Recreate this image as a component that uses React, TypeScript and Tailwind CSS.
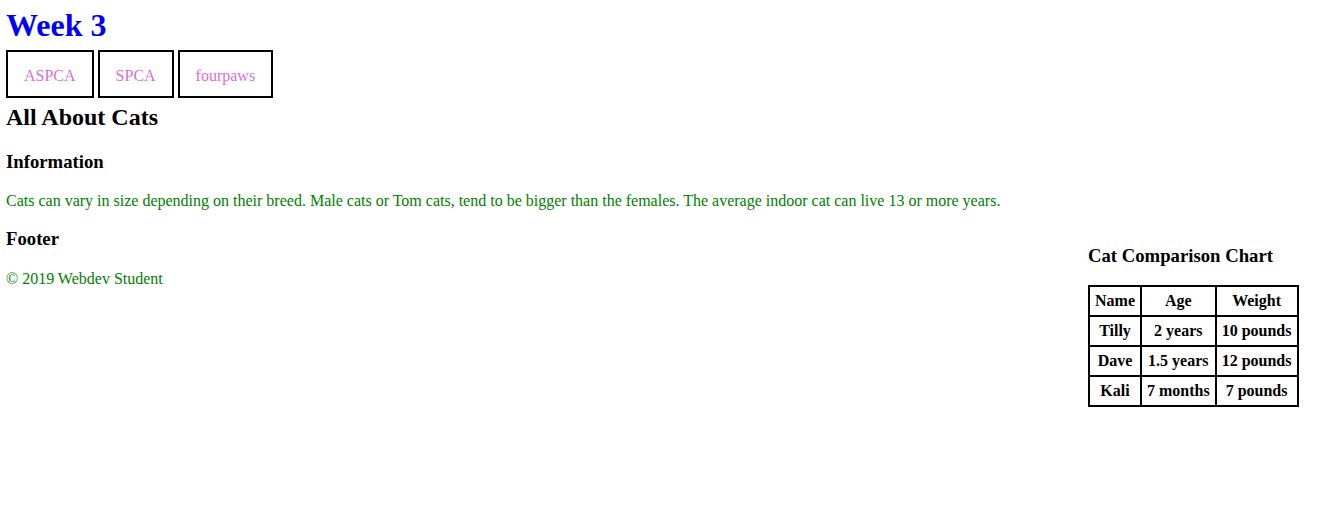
import React from "react";

const serif = { fontFamily: '"Liberation Serif", "Times New Roman", serif' };

export default function App() {
  const rows = [
    ["Tilly", "2 years", "10 pounds"],
    ["Dave", "1.5 years", "12 pounds"],
    ["Kali", "7 months", "7 pounds"],
  ];
  return (
    <div className="bg-white min-h-[514px] px-[6px] pt-[7px] text-black font-['Liberation_Serif',serif]" style={serif}>
      <h1 className="text-[32px] font-bold text-[#0000ff] leading-[37px] m-0">Week 3</h1>
      <nav className="flex gap-[4px] mt-[6px]">
        {["ASPCA", "SPCA", "fourpaws"].map((t) => (
          <a key={t} className="block border-2 border-black px-[16px] pt-[15px] pb-[11px] leading-[18px] text-[16px] text-[#da70d6]">
            {t}
          </a>
        ))}
      </nav>
      <h2 className="text-[24px] font-bold leading-[28px] mt-[5px]">All About Cats</h2>
      <h3 className="text-[18.72px] font-bold leading-[21.5px] mt-[20px]">Information</h3>
      <p className="text-[16px] leading-[18.4px] text-[#008000] mt-[19px]">
        Cats can vary in size depending on their breed. Male cats or Tom cats, tend to be bigger than the females. The average indoor cat can live 13 or more years.
      </p>
      <div className="flex justify-between items-start">
        <div>
          <h3 className="text-[18.72px] font-bold leading-[21.5px] mt-[18px]">Footer</h3>
          <p className="text-[16px] leading-[18.4px] text-[#008000] mt-[21px]">© 2019 Webdev Student</p>
        </div>
        <aside className="mt-[16px] mr-[31px] w-[216px]">
          <h3 className="text-[18.72px] font-bold leading-[21.5px] mt-[19px]">Cat Comparison Chart</h3>
          <table className="border-collapse border-2 border-black mt-[19px] text-[16px] font-bold">
            <tbody>
              <tr className="h-[30px]">
                <th className="border-2 border-black px-[5px] font-bold">Name</th>
                <th className="border-2 border-black px-[5px] font-bold">Age</th>
                <th className="border-2 border-black px-[5px] font-bold">Weight</th>
              </tr>
              {rows.map((r) => (
                <tr key={r[0]} className="h-[30px]">
                  {r.map((c) => (
                    <td key={c} className="border-2 border-black px-[5px] text-center">
                      {c}
                    </td>
                  ))}
                </tr>
              ))}
            </tbody>
          </table>
        </aside>
      </div>
    </div>
  );
}
